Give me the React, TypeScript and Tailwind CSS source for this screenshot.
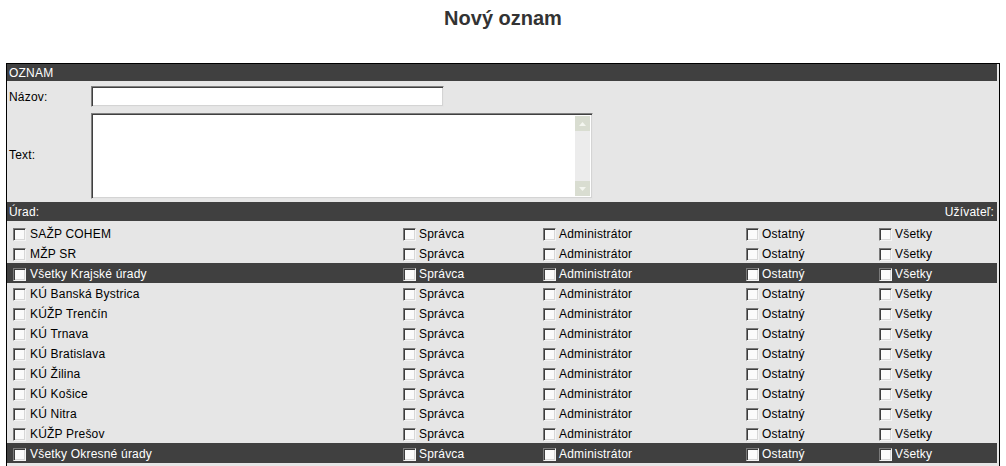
import React from "react";

const font = { fontFamily: '"Liberation Sans", Arial, sans-serif' };

function Box() {
  return (
    <span className="inline-block w-[13px] h-[13px] shrink-0 bg-[#fbfbfb] border border-t-[#7a7a7a] border-l-[#7a7a7a] border-r-[#f4f4f4] border-b-[#f4f4f4] shadow-[inset_1px_1px_0_#3c3c3c,inset_-1px_-1px_0_#d8d8d8]" />
  );
}

function Cell({ label, first }: { label: string; first?: boolean }) {
  return (
    <div className={`flex items-center gap-[3px] ${first ? "pl-[6px]" : "pl-[5px]"}`}>
      <Box />
      <span className={first ? "ml-[1px]" : ""}>{label}</span>
    </div>
  );
}

const rows: { name: string; dark?: boolean }[] = [
  { name: "SAŽP COHEM" },
  { name: "MŽP SR" },
  { name: "Všetky Krajské úrady", dark: true },
  { name: "KÚ Banská Bystrica" },
  { name: "KÚŽP Trenčín" },
  { name: "KÚ Trnava" },
  { name: "KÚ Bratislava" },
  { name: "KÚ Žilina" },
  { name: "KÚ Košice" },
  { name: "KÚ Nitra" },
  { name: "KÚŽP Prešov" },
  { name: "Všetky Okresné úrady", dark: true },
];

export default function App() {
  return (
    <div className="w-[1006px] bg-white text-[12px] leading-[14px] tracking-[0.2px] text-black" style={font}>
      <div className="h-[63px] flex justify-center pt-[6px]">
        <h1 className="text-[20px] leading-[24px] tracking-normal font-bold text-[#333333]">Nový oznam</h1>
      </div>
      <div className="ml-[6px] w-[994px] border-l border-t border-r border-black bg-[#e6e6e6] pr-[2px] pb-[6px]">
        <div className="h-[17px] bg-[#404040] text-white flex items-center pl-[2px]">OZNAM</div>
        <div className="h-[27px] flex items-start">
          <div className="w-[84px] pl-[2px] pt-[9px]">Názov:</div>
          <div className="mt-[5px] w-[353px] h-[21px] bg-white border border-t-[#808080] border-l-[#808080] border-r-[#e4e4e4] border-b-[#e4e4e4] shadow-[inset_1px_1px_0_#404040,inset_-1px_-1px_0_#d4d4d4]" />
        </div>
        <div className="h-[94px] flex items-start">
          <div className="w-[84px] pl-[2px] self-center">Text:</div>
          <div className="mt-[5px] w-[502px] h-[86px] bg-white flex border border-t-[#808080] border-l-[#808080] border-r-[#e4e4e4] border-b-[#e4e4e4] shadow-[inset_1px_1px_0_#404040,inset_-1px_-1px_0_#d4d4d4] p-[2px]">
            <div className="flex-1" />
            <div className="w-[15px] h-full bg-[#ececec] flex flex-col justify-between">
              <div className="h-[15px] bg-[#d9ddd1] flex items-center justify-center">
                <svg width="7" height="4" viewBox="0 0 7 4"><path d="M0 4 L3.5 0 L7 4 Z" fill="#f4f6f0" /></svg>
              </div>
              <div className="h-[15px] bg-[#d9ddd1] flex items-center justify-center">
                <svg width="7" height="4" viewBox="0 0 7 4"><path d="M0 0 L3.5 4 L7 0 Z" fill="#f4f6f0" /></svg>
              </div>
            </div>
          </div>
        </div>
        <div className="h-[19px] bg-[#404040] text-white flex items-center justify-between pl-[2px] pr-[3px]">
          <span>Úrad:</span>
          <span>Užívateľ:</span>
        </div>
        <div className="pt-[2px]">
          {rows.map((r) => (
            <div
              key={r.name}
              className={`h-[20px] pt-[2px] grid grid-cols-[391px_140px_203px_133px_1fr] items-center ${r.dark ? "bg-[#404040] text-white" : ""}`}
            >
              <Cell label={r.name} first />
              <Cell label="Správca" />
              <Cell label="Administrátor" />
              <Cell label="Ostatný" />
              <Cell label="Všetky" />
            </div>
          ))}
        </div>
      </div>
    </div>
  );
}
